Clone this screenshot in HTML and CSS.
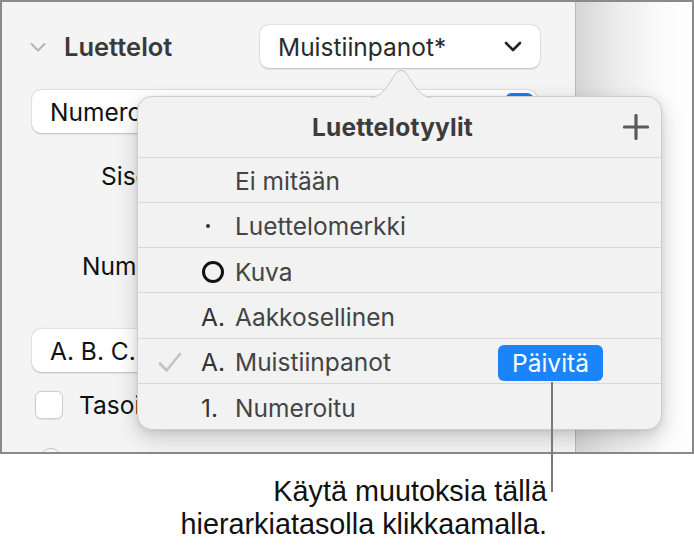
FILE: index.html
```html
<!DOCTYPE html>
<html lang="fi">
<head>
<meta charset="utf-8">
<title>Luettelotyylit</title>
<link rel="stylesheet" href="styles.css">
</head>
<body>
<div class="stage">
  <div class="frame">
    <div class="sidebar">
      <div class="sec-head">
        <span class="disclosure">
          <svg width="16" height="11" viewBox="0 0 16 11"><path d="M1.5 2 L8 8.5 L14.5 2" fill="none" stroke="#b4b4b4" stroke-width="2" stroke-linecap="round" stroke-linejoin="round"/></svg>
        </span>
        <span class="sec-title">Luettelot</span>
        <div class="popup popup-style">
          <span class="popup-text">Muistiinpanot*</span>
          <svg class="popup-chev" width="18" height="11" viewBox="0 0 18 11"><path d="M2 2 L9 9 L16 2" fill="none" stroke="#222" stroke-width="2.6" stroke-linecap="round" stroke-linejoin="round"/></svg>
        </div>
      </div>
      <div class="popup popup-wide">
        <span class="popup-text dark">Numeroitu</span>
        <span class="popup-cap"></span>
      </div>
      <div class="label-row lbl-sis">Sisennys</div>
      <div class="label-row lbl-num">Numerointi</div>
      <div class="popup popup-wide popup-abc">
        <span class="popup-text dark">A. B. C.</span>
      </div>
      <div class="check-row">
        <span class="checkbox"></span>
        <span class="check-label">Tasoitettu</span>
      </div>
      <div class="radio-row"><span class="radio"></span></div>
    </div>
    <div class="vsep"></div>
    <div class="canvas"></div>

    <div class="popover">
      <svg class="arrow" width="60" height="28" viewBox="0 0 60 28"><path d="M0 27.5 C 14 27.5, 22 4, 27 1.2 Q 30 -0.4 33 1.2 C 38 4, 46 27.5, 60 27.5" fill="#f2f2f2" stroke="#c9c9c9" stroke-width="1"/></svg>
      <div class="pop-head">
        <span class="pop-title">Luettelotyylit</span>
        <svg class="plus" width="26" height="26" viewBox="0 0 26 26"><path d="M13 1.5 V24.5 M1.5 13 H24.5" stroke="#5a5a5a" stroke-width="3.2" stroke-linecap="round"/></svg>
      </div>
      <div class="row"><span class="chk"></span><span class="mark"></span><span class="lbl">Ei mitään</span></div>
      <div class="row"><span class="chk"></span><span class="mark"><span class="dot"></span></span><span class="lbl">Luettelomerkki</span></div>
      <div class="row"><span class="chk"></span><span class="mark"><span class="ring"></span></span><span class="lbl">Kuva</span></div>
      <div class="row"><span class="chk"></span><span class="mark">A.</span><span class="lbl">Aakkosellinen</span></div>
      <div class="row"><span class="chk"><svg width="24" height="21" viewBox="0 0 24 21"><path d="M2 11.5 L8.5 18.5 L22 2" fill="none" stroke="#c3c3c3" stroke-width="2.6" stroke-linecap="round" stroke-linejoin="round"/></svg></span><span class="mark">A.</span><span class="lbl">Muistiinpanot</span><span class="update">Päivitä</span></div>
      <div class="row last"><span class="chk"></span><span class="mark">1.</span><span class="lbl">Numeroitu</span></div>
    </div>
  </div>
  <div class="callout-line"></div>
  <p class="caption">Käytä muutoksia tällä<br>hierarkiatasolla klikkaamalla.</p>
</div>
</body>
</html>
```

FILE: styles.css
```css
html, body {
  margin: 0;
  padding: 0;
  background: #fff;
}
body {
  width: 694px;
  height: 553px;
  overflow: hidden;
  font-family: "Inter", "Noto Sans", sans-serif;
}
.stage {
  position: relative;
  width: 694px;
  height: 553px;
}
.frame {
  position: relative;
  width: 694px;
  height: 454px;
  box-sizing: border-box;
  border: 2px solid #8a8a8a;
  display: flex;
}
.sidebar {
  width: 573px;
  background: #f4f4f4;
  overflow: hidden;
  display: flex;
  flex-direction: column;
}
.sidebar > * {
  flex-shrink: 0;
}
.vsep {
  width: 1px;
  background: #b9b9b9;
}
.canvas {
  flex: 1;
  background: linear-gradient(to right, #d6d6d6 0%, #ececec 35%, #fbfbfb 75%, #ffffff 100%);
}

/* section head */
.sec-head {
  display: flex;
  align-items: center;
  height: 43px;
  margin-top: 23px;
}
.disclosure {
  width: 34px;
  padding-left: 28px;
  display: flex;
  align-items: center;
  padding-top: 2px;
}
.sec-title {
  width: 196px;
  font-size: 25.5px;
  font-weight: 600;
  color: #3a3a3a;
}
.popup {
  box-sizing: border-box;
  height: 43px;
  background: #fff;
  border-radius: 9px;
  box-shadow: 0 0.5px 2px rgba(0,0,0,0.22), 0 0 0 0.5px rgba(0,0,0,0.06);
  display: flex;
  align-items: center;
  font-size: 24.5px;
  color: #2a2a2a;
}
.popup-style {
  width: 280px;
  padding-left: 18px;
  padding-right: 18px;
  justify-content: space-between;
}
.popup-wide {
  width: 505px;
  margin-left: 30px;
  margin-top: 22px;
  padding-left: 18px;
  padding-right: 3px;
  justify-content: space-between;
}
.popup-text.dark { color: #111; }
.popup-cap {
  width: 29px;
  height: 37px;
  border-radius: 7px;
  background: #1f7cf5;
}
.label-row {
  height: 45px;
  display: flex;
  align-items: center;
  font-size: 24.5px;
  color: #111;
  white-space: nowrap;
}
.lbl-sis { margin-top: 20px; padding-left: 99px; }
.lbl-num { margin-top: 45px; padding-left: 80px; }
.popup-abc { margin-top: 41px; }
.check-row {
  display: flex;
  align-items: center;
  margin-top: 19px;
  height: 28px;
  padding-left: 33px;
  white-space: nowrap;
}
.checkbox {
  width: 28px;
  height: 28px;
  box-sizing: border-box;
  border-radius: 6px;
  background: #fff;
  border: 1px solid #cdcdcd;
  box-shadow: 0 0.5px 1px rgba(0,0,0,0.08);
}
.check-label {
  margin-left: 16px;
  font-size: 24.5px;
  color: #111;
}
.radio-row {
  padding-left: 38px;
  margin-top: 29px;
}
.radio {
  display: block;
  width: 20px;
  height: 20px;
  border-radius: 50%;
  border: 1px solid #c4c4c4;
  background: #f9f9f9;
}

/* popover */
.popover {
  position: absolute;
  left: 135px;
  top: 94px;
  width: 525px;
  height: 334px;
  box-sizing: border-box;
  background: #f2f2f2;
  border: 1px solid #cdcdcd;
  border-radius: 15px;
  box-shadow: 0 8px 22px rgba(0,0,0,0.18), 0 2px 6px rgba(0,0,0,0.08);
  display: flex;
  flex-direction: column;
}
.arrow {
  position: absolute;
  left: 233px;
  top: -27px;
}
.pop-head {
  position: relative;
  height: 61px;
  box-sizing: border-box;
  border-bottom: 1px solid #d9d9d9;
  display: flex;
  align-items: center;
  justify-content: center;
  padding-right: 14px;
}
.pop-title {
  font-size: 24.5px;
  font-weight: 700;
  color: #3c3c3c;
  letter-spacing: 0.2px;
}
.plus {
  position: absolute;
  right: 12px;
  top: 17px;
}
.row {
  height: 45.5px;
  box-sizing: border-box;
  border-bottom: 1px solid #d9d9d9;
  display: flex;
  align-items: center;
  padding-left: 20px;
  padding-top: 3px;
  font-size: 24.5px;
  color: #444;
}
.row.last { border-bottom: none; }
.chk {
  width: 43px;
  display: flex;
  align-items: center;
}
.mark {
  width: 34px;
  display: flex;
  align-items: center;
  color: #333;
}
.dot {
  width: 4px;
  height: 4px;
  margin-left: 5px;
  border-radius: 50%;
  background: #333;
}
.ring {
  width: 22px;
  height: 22px;
  box-sizing: border-box;
  border-radius: 50%;
  border: 3px solid #111;
  margin-left: 1px;
}
.lbl {
  flex: 1;
}
.update {
  width: 105px;
  height: 36px;
  margin-right: 58px;
  margin-top: 1px;
  border-radius: 6px;
  background: #1a84fb;
  color: #fff;
  font-size: 24.5px;
  display: flex;
  align-items: center;
  justify-content: center;
}

/* annotation */
.callout-line {
  position: absolute;
  left: 551px;
  top: 382px;
  width: 2px;
  height: 110px;
  background: #7a7a7a;
}
.caption {
  margin: 21px 0 0 0;
  padding-right: 147px;
  text-align: right;
  font-family: "Liberation Sans", Arial, sans-serif;
  font-size: 28.8px;
  line-height: 33px;
  color: #111;
}
```
